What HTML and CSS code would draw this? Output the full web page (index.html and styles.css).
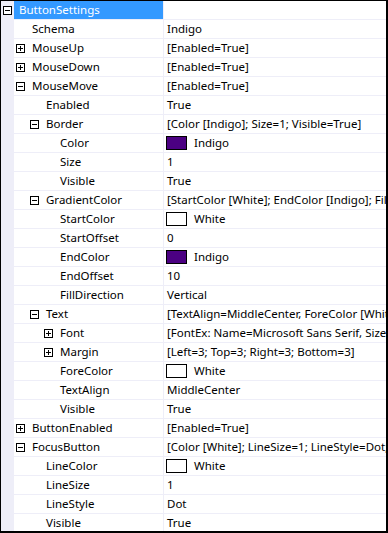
FILE: index.html
```html
<!DOCTYPE html>
<html>
<head>
<meta charset="utf-8">
<link rel="stylesheet" href="styles.css">
</head>
<body>
<div class="grid">
  <div class="row selected"><div class="name l0"><span class="tog minus"></span><span class="label">ButtonSettings</span></div><div class="value"></div></div>
  <div class="row"><div class="name l1"><span class="tog"></span><span class="label">Schema</span></div><div class="value">Indigo</div></div>
  <div class="row"><div class="name l1"><span class="tog plus"></span><span class="label">MouseUp</span></div><div class="value">[Enabled=True]</div></div>
  <div class="row"><div class="name l1"><span class="tog plus"></span><span class="label">MouseDown</span></div><div class="value">[Enabled=True]</div></div>
  <div class="row"><div class="name l1"><span class="tog minus"></span><span class="label">MouseMove</span></div><div class="value">[Enabled=True]</div></div>
  <div class="row"><div class="name l2"><span class="tog"></span><span class="label">Enabled</span></div><div class="value">True</div></div>
  <div class="row"><div class="name l2"><span class="tog minus"></span><span class="label">Border</span></div><div class="value">[Color [Indigo]; Size=1; Visible=True]</div></div>
  <div class="row"><div class="name l3"><span class="tog"></span><span class="label">Color</span></div><div class="value swatched"><span class="swatch indigo"></span>Indigo</div></div>
  <div class="row"><div class="name l3"><span class="tog"></span><span class="label">Size</span></div><div class="value">1</div></div>
  <div class="row"><div class="name l3"><span class="tog"></span><span class="label">Visible</span></div><div class="value">True</div></div>
  <div class="row"><div class="name l2"><span class="tog minus"></span><span class="label">GradientColor</span></div><div class="value">[StartColor [White]; EndColor [Indigo]; FillDirection=Vertical]</div></div>
  <div class="row"><div class="name l3"><span class="tog"></span><span class="label">StartColor</span></div><div class="value swatched"><span class="swatch white"></span>White</div></div>
  <div class="row"><div class="name l3"><span class="tog"></span><span class="label">StartOffset</span></div><div class="value">0</div></div>
  <div class="row"><div class="name l3"><span class="tog"></span><span class="label">EndColor</span></div><div class="value swatched"><span class="swatch indigo"></span>Indigo</div></div>
  <div class="row"><div class="name l3"><span class="tog"></span><span class="label">EndOffset</span></div><div class="value">10</div></div>
  <div class="row"><div class="name l3"><span class="tog"></span><span class="label">FillDirection</span></div><div class="value">Vertical</div></div>
  <div class="row"><div class="name l2"><span class="tog minus"></span><span class="label">Text</span></div><div class="value">[TextAlign=MiddleCenter, ForeColor [White]; Visible=True]</div></div>
  <div class="row"><div class="name l3"><span class="tog plus"></span><span class="label">Font</span></div><div class="value">[FontEx: Name=Microsoft Sans Serif, Size=8.25]</div></div>
  <div class="row"><div class="name l3"><span class="tog plus"></span><span class="label">Margin</span></div><div class="value">[Left=3; Top=3; Right=3; Bottom=3]</div></div>
  <div class="row"><div class="name l3"><span class="tog"></span><span class="label">ForeColor</span></div><div class="value swatched"><span class="swatch white"></span>White</div></div>
  <div class="row"><div class="name l3"><span class="tog"></span><span class="label">TextAlign</span></div><div class="value">MiddleCenter</div></div>
  <div class="row"><div class="name l3"><span class="tog"></span><span class="label">Visible</span></div><div class="value">True</div></div>
  <div class="row"><div class="name l1"><span class="tog plus"></span><span class="label">ButtonEnabled</span></div><div class="value">[Enabled=True]</div></div>
  <div class="row"><div class="name l1"><span class="tog minus"></span><span class="label">FocusButton</span></div><div class="value">[Color [White]; LineSize=1; LineStyle=Dot; Visible=True]</div></div>
  <div class="row"><div class="name l2"><span class="tog"></span><span class="label">LineColor</span></div><div class="value swatched"><span class="swatch white"></span>White</div></div>
  <div class="row"><div class="name l2"><span class="tog"></span><span class="label">LineSize</span></div><div class="value">1</div></div>
  <div class="row"><div class="name l2"><span class="tog"></span><span class="label">LineStyle</span></div><div class="value">Dot</div></div>
  <div class="row"><div class="name l2"><span class="tog"></span><span class="label">Visible</span></div><div class="value">True</div></div>
</div>
</body>
</html>
```
FILE: styles.css
```css
html, body {
  margin: 0;
  padding: 0;
  background: #fff;
}
.grid {
  box-sizing: border-box;
  width: 388px;
  height: 533px;
  overflow: hidden;
  border-top: 1px solid #000;
  border-left: 1px solid #000;
  border-right: 2px solid #000;
  border-bottom: 2px solid #000;
  font-family: "Noto Sans", "Open Sans", sans-serif;
  font-size: 11.5px;
  color: #000;
}
.row {
  display: flex;
  height: 19px;
}
.name {
  box-sizing: border-box;
  width: 163px;
  flex: none;
  display: flex;
  align-items: center;
  height: 19px;
  background: linear-gradient(to right, #eeeef8 13px, #fff 13px);
  border-bottom: 1px solid #eeeef8;
  border-right: 1px solid #eeeef8;
  white-space: nowrap;
}
.selected .name {
  background: linear-gradient(to right, #eeeef8 13px, #3399ff 13px);
  color: #fff;
}
.l0 { padding-left: 2px; }
.l1 { padding-left: 15px; }
.l2 { padding-left: 29px; }
.l3 { padding-left: 43px; }
.tog {
  box-sizing: border-box;
  width: 9px;
  height: 9px;
  margin-right: 7px;
  flex: none;
  position: relative;
}
.tog.plus, .tog.minus {
  border: 1px solid #000;
  background: #fff;
}
.tog.plus::before, .tog.minus::before {
  content: "";
  position: absolute;
  left: 1px;
  top: 3px;
  width: 5px;
  height: 1px;
  background: #000;
}
.tog.plus::after {
  content: "";
  position: absolute;
  left: 3px;
  top: 1px;
  width: 1px;
  height: 5px;
  background: #000;
}
.label {
  line-height: 18px;
}
.value {
  box-sizing: border-box;
  flex: 1;
  min-width: 0;
  height: 19px;
  padding-left: 3px;
  line-height: 18px;
  border-bottom: 1px solid #eeeef8;
  white-space: nowrap;
  overflow: hidden;
  display: flex;
  align-items: center;
}
.value.swatched {
  padding-left: 2px;
}
.swatch {
  box-sizing: border-box;
  width: 21px;
  height: 14px;
  border: 1px solid #000;
  margin-right: 7px;
  flex: none;
}
.swatch.indigo { background: #4b0082; }
.swatch.white { background: #fff; }
```
